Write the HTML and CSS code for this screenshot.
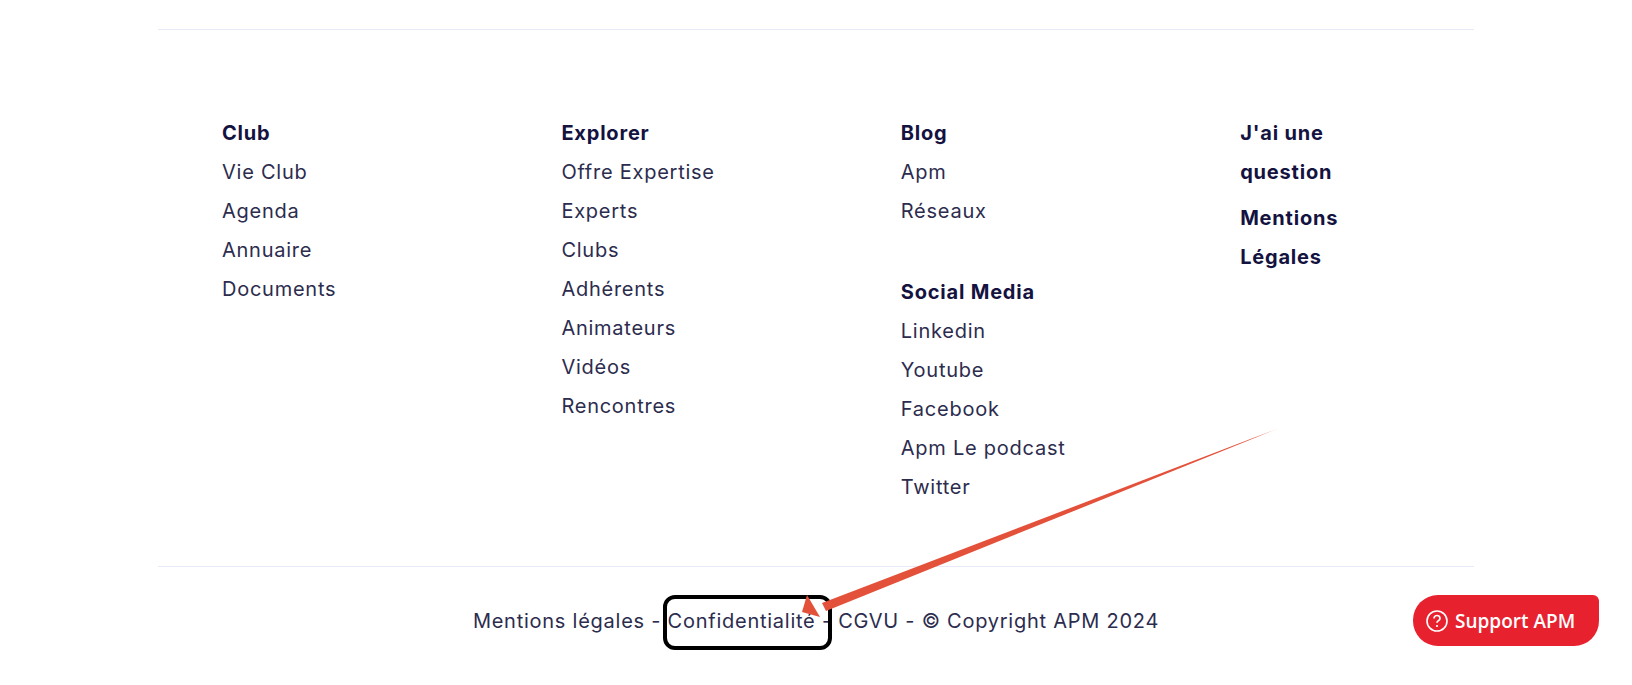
FILE: index.html
```html
<!DOCTYPE html>
<html lang="fr">
<head>
<meta charset="utf-8">
<title>APM</title>
<link rel="stylesheet" href="styles.css">
</head>
<body>
<footer class="footer">
  <div class="nav">
    <div class="col">
      <h4 class="head">Club</h4>
      <a class="link">Vie Club</a>
      <a class="link">Agenda</a>
      <a class="link">Annuaire</a>
      <a class="link">Documents</a>
    </div>
    <div class="col">
      <h4 class="head">Explorer</h4>
      <a class="link">Offre Expertise</a>
      <a class="link">Experts</a>
      <a class="link">Clubs</a>
      <a class="link">Adhérents</a>
      <a class="link">Animateurs</a>
      <a class="link">Vidéos</a>
      <a class="link">Rencontres</a>
    </div>
    <div class="col">
      <h4 class="head">Blog</h4>
      <a class="link">Apm</a>
      <a class="link">Réseaux</a>
      <h4 class="head head-gap">Social Media</h4>
      <a class="link">Linkedin</a>
      <a class="link">Youtube</a>
      <a class="link">Facebook</a>
      <a class="link">Apm Le podcast</a>
      <a class="link">Twitter</a>
    </div>
    <div class="col col-narrow">
      <h4 class="head">J'ai une question</h4>
      <h4 class="head head-second">Mentions Légales</h4>
    </div>
  </div>
  <div class="legal">Mentions légales - Confidentialité - CGVU - © Copyright APM 2024</div>
</footer>
<svg class="annotation" width="1632" height="685" viewBox="0 0 1632 685" aria-hidden="true">
  <defs>
    <linearGradient id="fade" gradientUnits="userSpaceOnUse" x1="1100" y1="497" x2="1282" y2="427">
      <stop offset="0" stop-color="#e4513b"/>
      <stop offset="0.85" stop-color="#e4513b"/>
      <stop offset="1" stop-color="#e4513b" stop-opacity="0.1"/>
    </linearGradient>
  </defs>
  <rect class="callout" x="665" y="597" width="165" height="51" rx="10"/>
  <path fill="url(#fade)" d="M1282 427 L822 603 L826 611 Z"/>
  <path fill="#e4513b" d="M802 612 L807 595 L820 617 Z"/>
</svg>
<a class="support">
  <svg class="help" width="24" height="24" viewBox="0 0 24 24" aria-hidden="true">
    <circle cx="12" cy="12" r="10" fill="none" stroke="#fff" stroke-width="1.6"/>
    <path d="M9 9.5a3 3 0 0 1 6 0c0 2-3 2.2-3 4.2" fill="none" stroke="#fff" stroke-width="1.7"/>
    <circle cx="12" cy="17" r="1.1" fill="#fff"/>
  </svg>
  <span>Support APM</span>
</a>
</body>
</html>
```
FILE: styles.css
```css
html, body { margin: 0; padding: 0; background: #fff; height: 685px; overflow: hidden; }
body { font-family: "Inter", "Liberation Sans", sans-serif; color: #2c2c4e; position: relative; }
.footer { margin: 29px 158px 0; border-top: 1px solid #e9eaf8; }
.nav { display: grid; grid-template-columns: repeat(4, 339.4px); padding: 84px 0 0 64px; height: 452px; border-bottom: 1px solid #e9eaf8; box-sizing: content-box; }
.col { display: flex; flex-direction: column; align-items: flex-start; }
.col-narrow { width: 118px; }
.head { margin: 0; font-size: 20px; line-height: 39px; font-weight: 700; letter-spacing: 0.8px; color: #14123f; }
.head-gap { margin-top: 42px; }
.head-second { margin-top: 7px; }
.link { font-size: 20px; line-height: 39px; font-weight: 400; letter-spacing: 0.75px; color: #2c2c4e; }
.legal { text-align: center; font-size: 20px; line-height: 39px; letter-spacing: 0.75px; margin-top: 35px; }
.annotation { position: absolute; left: 0; top: 0; pointer-events: none; }
.callout { fill: none; stroke: #000; stroke-width: 4; }
.support { position: absolute; left: 1413px; top: 595px; width: 186px; height: 51px; display: flex; align-items: center; gap: 6px; padding-left: 12px; box-sizing: border-box; background: #e8212e; border-radius: 25px 6px 25px 25px; color: #fff; font-family: "Open Sans", sans-serif; font-size: 19px; font-weight: 600; }
.help { flex: none; }
```
